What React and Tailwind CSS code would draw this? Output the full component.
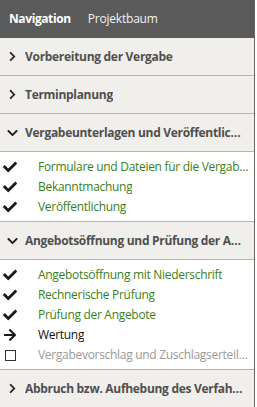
import React from "react";
import { FaChevronRight, FaChevronDown, FaCheck, FaArrowRight } from "react-icons/fa";

const sections = [
  { title: "Vorbereitung der Vergabe", open: false },
  { title: "Terminplanung", open: false },
  {
    title: "Vergabeunterlagen und Veröffentlichung",
    open: true,
    items: [
      { label: "Formulare und Dateien für die Vergabeunterlagen", state: "done" },
      { label: "Bekanntmachung", state: "done" },
      { label: "Veröffentlichung", state: "done" },
    ],
  },
  {
    title: "Angebotsöffnung und Prüfung der Angebote",
    open: true,
    items: [
      { label: "Angebotsöffnung mit Niederschrift", state: "done" },
      { label: "Rechnerische Prüfung", state: "done" },
      { label: "Prüfung der Angebote", state: "done" },
      { label: "Wertung", state: "current" },
      { label: "Vergabevorschlag und Zuschlagserteilung", state: "todo" },
    ],
  },
  { title: "Abbruch bzw. Aufhebung des Verfahrens", open: false },
];

const ItemIcon = ({ state }) => {
  if (state === "done") return <FaCheck className="size-[14px] text-[#1a1a1a]" />;
  if (state === "current") return <FaArrowRight className="size-[14px] text-[#1a1a1a]" />;
  return <span className="block size-[11px] border border-[#333] ml-[2px]" />;
};

const itemColor = {
  done: "text-[#3b7f1a]",
  current: "text-[#111]",
  todo: "text-[#9a9a9a]",
};

const App = () => {
  return (
    <div className="w-[257px] h-[407px] bg-white overflow-hidden font-['Open_Sans',sans-serif] text-[12px]">
      <div className="w-[255px] border-r border-[#6b6760] h-full">
        {/* Header tabs */}
        <div className="h-[38px] bg-[#5a5a5a] flex items-center gap-[17px] px-[9px] text-[12px] text-white">
          <span className="font-bold tracking-[-0.4px]">Navigation</span>
          <span className="tracking-[-0.2px] text-[#f2f2f2]">Projektbaum</span>
        </div>

        {sections.map((s) => (
          <div key={s.title}>
            <div className="h-[38px] bg-[#f0efeb] border-b border-[#b5b2aa] flex items-center pl-[7px] pr-[8px] gap-[7px] text-[#4f4f4f] font-bold">
              <span className="w-[11px] flex justify-center shrink-0">
                {s.open ? (
                  <FaChevronDown className="size-[12px] text-[#222]" />
                ) : (
                  <FaChevronRight className="size-[11px] text-[#222]" />
                )}
              </span>
              <span className="truncate tracking-[-0.3px]">{s.title}</span>
            </div>
            {s.open && (
              <div className="pt-[5px] pb-[4px] border-b border-[#b5b2aa]">
                {s.items.map((it) => (
                  <div key={it.label} className="h-[20px] flex items-center pl-[3px] pr-[4px]">
                    <span className="w-[35px] shrink-0 flex items-center">
                      <ItemIcon state={it.state} />
                    </span>
                    <span className={`truncate tracking-[-0.3px] ${itemColor[it.state]}`}>{it.label}</span>
                  </div>
                ))}
              </div>
            )}
          </div>
        ))}
      </div>
    </div>
  );
};

export default App;
